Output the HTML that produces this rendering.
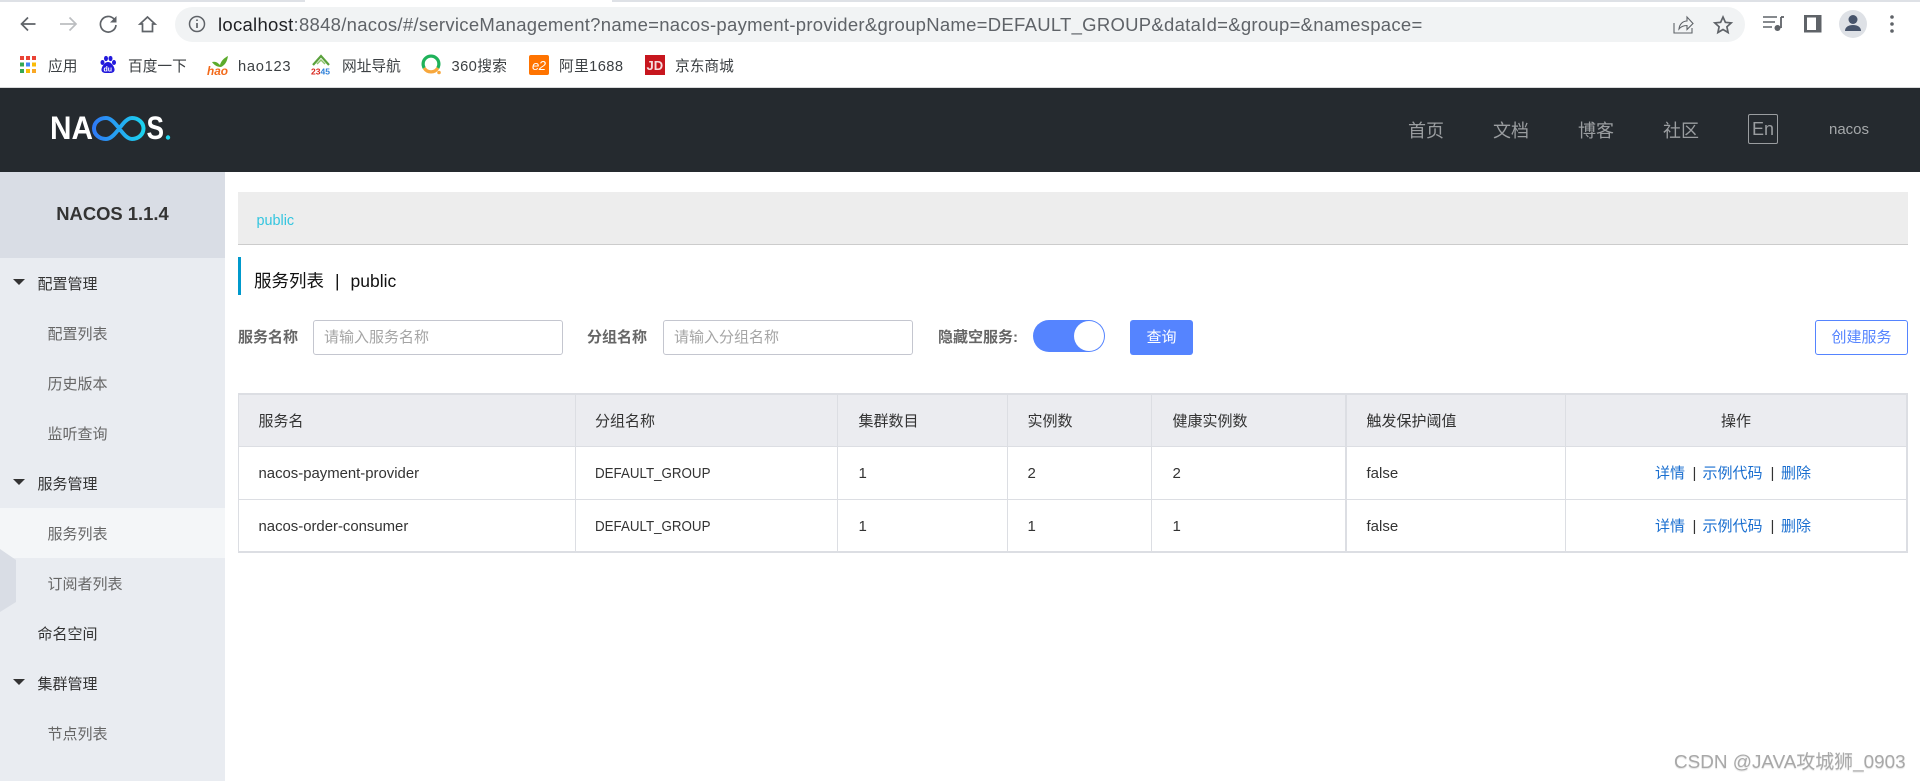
<!DOCTYPE html>
<html lang="zh"><head><meta charset="utf-8"><title>Nacos</title>
<style>
*{box-sizing:border-box}
html,body{margin:0;padding:0;width:1920px;height:781px;overflow:hidden;background:#fff;font-family:"Liberation Sans","Noto Sans CJK SC",sans-serif}
.t{position:absolute;white-space:nowrap;line-height:20px;height:20px}
.b{position:absolute}
.bm{font-size:14.700px;color:#3c4043}
.nav{font-size:18px;color:#9a9da0;line-height:24px;height:24px}
.top{font-size:15px;color:#333;left:37.500px}
.sub{font-size:15px;color:#666;left:47.500px}
.lbl{font-size:15px;color:#666;font-weight:bold}
.ph{font-size:15px;color:#a5a5a5}
.c{font-size:15px;color:#333}
.g{font-size:15px;color:#333;transform:scaleX(.89);transform-origin:0 50%}
.a{font-size:15px;color:#1a6fd0}
svg{position:absolute;overflow:visible}
</style></head><body>

<!-- browser chrome -->
<div class="b" style="left:0;top:0;width:305px;height:2px;background:#dee1e6"></div>
<div class="b" style="left:612px;top:0;width:1308px;height:2px;background:#dee1e6"></div>
<div class="b" style="left:175px;top:7px;width:1570px;height:35px;border-radius:18px;background:#f1f3f4"></div>
<div class="t" style="left:218px;top:15px;font-size:18.500px;color:#5f6368;letter-spacing:.28px" id="url"><span style="color:#202124">localhost</span>:8848/nacos/#/serviceManagement?name=nacos-payment-provider&amp;groupName=DEFAULT_GROUP&amp;dataId=&amp;group=&amp;namespace=</div>

<svg style="left:0;top:0" width="1920" height="88" fill="none" stroke="#5f6368" stroke-width="1.700">
  <path d="M35.500 24H21.500M28 17.500l-6.500 6.500 6.500 6.500"/>
  <path d="M76 24H60M69.500 17.500l6.500 6.500-6.500 6.500" stroke="#bcbec1"/>
  <path d="M114 19a7.800 7.800 0 1 0 2 6"/>
  <path d="M116.500 16v6.500H110z" fill="#5f6368" stroke="none"/>
  <path d="M147.500 17l-7.500 7h2.500v7.500h10V24h2.500z"/>
  <circle cx="197" cy="24" r="7.500" stroke-width="1.500"/>
  <path d="M197 23v5M197 19.500v1.500" stroke-width="1.700"/>
  <path d="M1674 23v10h18v-5M1679 29c.5-5 4-8 8-8v-4l6 6.500-6 6v-4c-3 0-6 1-8 3.500z" stroke-width="1.100"/>
  <path d="M1723 17l2.400 5.300 5.800.6-4.300 3.900 1.200 5.700-5.100-3-5.100 3 1.200-5.700-4.300-3.900 5.800-.6z" stroke-width="1.700"/>
  <path d="M1763 17h14M1763 22h12M1763 27h9" stroke-width="1.600"/>
  <path d="M1781 17v11" stroke-width="1.800"/><path d="M1781 17h3" stroke-width="1.800"/>
  <circle cx="1777.500" cy="28" r="3" fill="#5f6368" stroke="none"/>
  <rect x="1804" y="15" width="17.500" height="17.500" fill="#5f6368" stroke="none"/>
  <rect x="1807" y="17.500" width="9" height="12.500" fill="#fff" stroke="none"/>
  <circle cx="1853" cy="24" r="14" fill="#dee1e6" stroke="none"/>
  <circle cx="1853" cy="19.500" r="4.500" fill="#47546b" stroke="none"/>
  <path d="M1845 31c0-4 3.500-6 8-6s8 2 8 6z" fill="#47546b" stroke="none"/>
  <g fill="#5f6368" stroke="none"><circle cx="1892" cy="17" r="1.800"/><circle cx="1892" cy="24" r="1.800"/><circle cx="1892" cy="31" r="1.800"/></g>
</svg>

<!-- bookmarks -->
<svg style="left:0;top:0" width="800" height="88" fill="none">
  <g>
    <rect x="20" y="56" width="4" height="4" fill="#ea4335"/><rect x="26" y="56" width="4" height="4" fill="#ea4335"/><rect x="32" y="56" width="4" height="4" fill="#ea4335"/>
    <rect x="20" y="62.500" width="4" height="4" fill="#34a853"/><rect x="26" y="62.500" width="4" height="4" fill="#4285f4"/><rect x="32" y="62.500" width="4" height="4" fill="#fbbc05"/>
    <rect x="20" y="69" width="4" height="4" fill="#34a853"/><rect x="26" y="69" width="4" height="4" fill="#fbbc05"/><rect x="32" y="69" width="4" height="4" fill="#f9a825"/>
  </g>
  <g fill="#2319dc">
    <ellipse cx="102.500" cy="62.500" rx="2" ry="2.500"/><ellipse cx="106" cy="58.500" rx="2" ry="2.600"/><ellipse cx="110.500" cy="58.500" rx="2" ry="2.600"/><ellipse cx="114" cy="62.500" rx="2" ry="2.500"/>
    <path d="M108 62c-3 0-6 4-6.500 7-.4 3 2 4 4 4h5c2 0 4.500-1 4-4-.5-3-3.500-7-6.500-7z"/>
  </g>
  <text x="103.500" y="71.500" font-size="7" font-weight="bold" fill="#fff" font-family="Liberation Sans">du</text>
  <path d="M212 62c4-1 6 1 8 3 1-4 4-7 8-9-1 6-3 9-7 11-4 0-7-2-9-5z" fill="#5cab2c"/>
  <text x="207" y="75" font-size="11.500" font-weight="bold" font-style="italic" fill="#f26a1b" font-family="Liberation Sans" textLength="21" lengthAdjust="spacingAndGlyphs">hao</text>
  <path d="M313 65l8-9 8 9" stroke="#5aa13c" stroke-width="2.200"/><path d="M317 64l4-4 4 4" stroke="#8bc26a" stroke-width="1.500"/>
  <text x="311" y="74.500" font-size="8.500" font-weight="bold" font-family="Liberation Sans"><tspan fill="#d8261c">2</tspan><tspan fill="#d8261c">3</tspan><tspan fill="#2c7fd9">4</tspan><tspan fill="#2c7fd9">5</tspan></text>
  <path d="M424.200 68A7.900 7.900 0 1 1 437.800 68" stroke="#1fb25a" stroke-width="3.200"/>
  <path d="M424.200 68A7.900 7.900 0 0 0 437.800 68" stroke="#f7a73c" stroke-width="3.200"/>
  <circle cx="439" cy="72.500" r="1.800" fill="#f7a73c"/>
  <rect x="529" y="55" width="20" height="20" rx="2" fill="#ff7300"/>
  <text x="532" y="70" font-size="13" font-style="italic" fill="#fff" font-family="Liberation Sans" textLength="14">e2</text>
  <rect x="645" y="55" width="20" height="20" fill="#c7161e"/>
  <text x="646.500" y="70" font-size="13" font-weight="bold" fill="#f6dcdd" font-family="Liberation Sans">JD</text>
</svg>
<div class="t bm" style="left:48px;top:56.500px">应用</div>
<div class="t bm" style="left:128px;top:56.500px">百度一下</div>
<div class="t bm" style="left:238px;top:56.500px;letter-spacing:.7px">hao123</div>
<div class="t bm" style="left:342px;top:56.500px">网址导航</div>
<div class="t bm" style="left:451.500px;top:56.500px;letter-spacing:.4px">360搜索</div>
<div class="t bm" style="left:559px;top:56.500px;letter-spacing:.4px">阿里1688</div>
<div class="t bm" style="left:675px;top:56.500px">京东商城</div>

<!-- header -->
<div class="b" style="left:0;top:87px;width:1920px;height:85px;background:#252a2f;border-top:1px solid #d9dadb"></div>
<svg style="left:0;top:88px" width="200" height="84" fill="none">
  <defs><linearGradient id="g" x1="92" x2="145" y1="0" y2="0" gradientUnits="userSpaceOnUse"><stop offset="0" stop-color="#2f78f6"/><stop offset="1" stop-color="#1bd4ee"/></linearGradient></defs>
  <text x="50" y="51" font-size="32" font-weight="bold" fill="#fff" font-family="Liberation Sans" textLength="43" lengthAdjust="spacingAndGlyphs">NA</text>
  <path d="M106 30c-7 0-12 4.800-12 10.500s5 10.500 12 10.500c10 0 16.500-21 26-21 6.500 0 11.500 4.800 11.500 10.500S138.500 51 132 51c-9.500 0-16-21-26-21z" stroke="url(#g)" stroke-width="4"/>
  <text x="146.500" y="51" font-size="32" font-weight="bold" fill="#fff" font-family="Liberation Sans" textLength="17.500" lengthAdjust="spacingAndGlyphs">S</text>
  <circle cx="168" cy="49.500" r="2.200" fill="#1bd4ee"/>
</svg>
<div class="t nav" style="left:1408px;top:118.500px">首页</div>
<div class="t nav" style="left:1493px;top:118.500px">文档</div>
<div class="t nav" style="left:1578px;top:118.500px">博客</div>
<div class="t nav" style="left:1663px;top:118.500px">社区</div>
<div class="t nav" style="left:1748px;top:114px;width:30px;height:30px;line-height:28px;border:1px solid #9a9da0;border-radius:2px;text-align:center">En</div>
<div class="t" style="left:1829px;top:119.500px;font-size:15px;color:#a5a8aa">nacos</div>

<!-- sidebar -->
<div class="b" style="left:0;top:172px;width:225px;height:609px;background:#e9ecf1"></div>
<div class="b" style="left:0;top:172px;width:225px;height:86px;background:#d9dde5"></div>
<div class="t" style="left:0;top:204px;width:225px;text-align:center;font-size:18.400px;font-weight:bold;color:#333">NACOS 1.1.4</div>
<div class="b" style="left:0;top:508px;width:225px;height:50px;background:#f4f6f8"></div>
<svg style="left:0;top:0" width="225" height="781">
  <path d="M0 549L16 560V602L0 612z" fill="#d9dde5"/>
  <path d="M13 279h12l-6 6z" fill="#333"/>
  <path d="M13 479h12l-6 6z" fill="#333"/>
  <path d="M13 679h12l-6 6z" fill="#333"/>
</svg>
<div class="t top" style="top:274.500px">配置管理</div>
<div class="t sub" style="top:324.500px">配置列表</div>
<div class="t sub" style="top:374.500px">历史版本</div>
<div class="t sub" style="top:424.500px">监听查询</div>
<div class="t top" style="top:474.500px">服务管理</div>
<div class="t sub" style="top:524.500px">服务列表</div>
<div class="t sub" style="top:574.500px">订阅者列表</div>
<div class="t top" style="top:624.500px">命名空间</div>
<div class="t top" style="top:674.500px">集群管理</div>
<div class="t sub" style="top:724.500px">节点列表</div>

<!-- breadcrumb -->
<div class="b" style="left:238px;top:192px;width:1670px;height:53px;background:#ededed;border-bottom:1px solid #ccc"></div>
<div class="t" style="left:256.500px;top:210.500px;font-size:14.400px;color:#33c5df">public</div>

<!-- title -->
<div class="b" style="left:238px;top:257px;width:3px;height:38px;background:#09c"></div>
<div class="t" style="left:254px;top:270.500px;font-size:17.500px;color:#111">服务列表</div>
<div class="t" style="left:335px;top:270.500px;font-size:17.500px;color:#111">|</div>
<div class="t" style="left:350.500px;top:270.500px;font-size:17.500px;color:#111">public</div>

<!-- form -->
<div class="t lbl" style="left:238px;top:328px">服务名称</div>
<div class="b" style="left:313px;top:320px;width:250px;height:35px;border:1px solid #c4c6cf;border-radius:3px;background:#fff"></div>
<div class="t ph" style="left:324px;top:328px">请输入服务名称</div>
<div class="t lbl" style="left:587px;top:328px">分组名称</div>
<div class="b" style="left:663px;top:320px;width:250px;height:35px;border:1px solid #c4c6cf;border-radius:3px;background:#fff"></div>
<div class="t ph" style="left:674px;top:328px">请输入分组名称</div>
<div class="t lbl" style="left:938px;top:328px">隐藏空服务:</div>
<div class="b" style="left:1033px;top:320px;width:72px;height:32px;border-radius:16px;background:#5584ff"></div>
<div class="b" style="left:1074px;top:321px;width:30px;height:30px;border-radius:50%;background:#fff"></div>
<div class="b" style="left:1130px;top:320px;width:63px;height:35px;border-radius:3px;background:#5584ff"></div>
<div class="t" style="left:1130px;top:328px;width:63px;text-align:center;font-size:15px;color:#fff">查询</div>
<div class="b" style="left:1815px;top:320px;width:93px;height:35px;border-radius:3px;border:1px solid #5584ff;background:#fff"></div>
<div class="t" style="left:1815px;top:328px;width:93px;text-align:center;font-size:15px;color:#5584ff">创建服务</div>

<!-- table -->
<div class="b" style="left:238px;top:393px;width:1670px;height:160px;border:2px solid #dcdee3;border-left-width:1px;background:#fff"></div>
<div class="b" style="left:239px;top:395px;width:1667px;height:51px;background:#ebecf0"></div>
<div class="b" style="left:239px;top:446px;width:1667px;height:1px;background:#dcdee3"></div>
<div class="b" style="left:239px;top:499px;width:1667px;height:1px;background:#dcdee3"></div>
<div class="b" style="left:575px;top:395px;width:1px;height:156px;background:#dcdee3"></div>
<div class="b" style="left:837px;top:395px;width:1px;height:156px;background:#dcdee3"></div>
<div class="b" style="left:1007px;top:395px;width:1px;height:156px;background:#dcdee3"></div>
<div class="b" style="left:1151px;top:395px;width:1px;height:156px;background:#dcdee3"></div>
<div class="b" style="left:1345px;top:395px;width:2px;height:156px;background:#dcdee3"></div>
<div class="b" style="left:1565px;top:395px;width:1px;height:156px;background:#dcdee3"></div>

<div class="t c" style="left:258.500px;top:411.500px">服务名</div>
<div class="t c" style="left:595px;top:411.500px">分组名称</div>
<div class="t c" style="left:858.500px;top:411.500px">集群数目</div>
<div class="t c" style="left:1027.500px;top:411.500px">实例数</div>
<div class="t c" style="left:1172.500px;top:411.500px">健康实例数</div>
<div class="t c" style="left:1366.500px;top:411.500px">触发保护阈值</div>
<div class="t c" style="left:1566px;top:411.500px;width:340px;text-align:center">操作</div>

<div class="t c" style="left:258.500px;top:464px;font-size:14.900px">nacos-payment-provider</div>
<div class="t g" style="left:595px;top:464px">DEFAULT_GROUP</div>
<div class="t c" style="left:858.500px;top:464px">1</div>
<div class="t c" style="left:1027.500px;top:464px">2</div>
<div class="t c" style="left:1172.500px;top:464px">2</div>
<div class="t c" style="left:1366.500px;top:464px">false</div>
<div class="t a" style="left:1655px;top:464px">详情</div><div class="t a" style="left:1692.500px;top:464px;color:#333">|</div><div class="t a" style="left:1702.500px;top:464px">示例代码</div><div class="t a" style="left:1770.500px;top:464px;color:#333">|</div><div class="t a" style="left:1781px;top:464px">删除</div>

<div class="t c" style="left:258.500px;top:517px;font-size:14.900px">nacos-order-consumer</div>
<div class="t g" style="left:595px;top:517px">DEFAULT_GROUP</div>
<div class="t c" style="left:858.500px;top:517px">1</div>
<div class="t c" style="left:1027.500px;top:517px">1</div>
<div class="t c" style="left:1172.500px;top:517px">1</div>
<div class="t c" style="left:1366.500px;top:517px">false</div>
<div class="t a" style="left:1655px;top:517px">详情</div><div class="t a" style="left:1692.500px;top:517px;color:#333">|</div><div class="t a" style="left:1702.500px;top:517px">示例代码</div><div class="t a" style="left:1770.500px;top:517px;color:#333">|</div><div class="t a" style="left:1781px;top:517px">删除</div>

<!-- watermark -->
<div class="t" style="left:1674px;top:752.500px;font-size:18.900px;color:#a8a8a8;text-shadow:0 1px 1px rgba(0,0,0,.12)">CSDN @JAVA攻城狮_0903</div>
</body></html>
